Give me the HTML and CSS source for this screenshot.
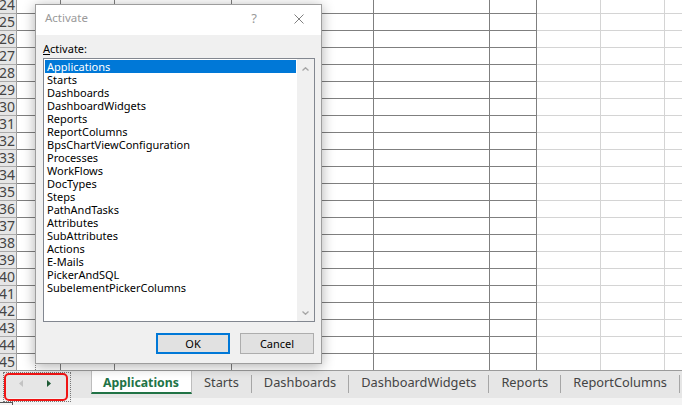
FILE: index.html
```html
<!DOCTYPE html>
<html lang="en">
<head>
<meta charset="utf-8">
<title>Activate</title>
<link rel="stylesheet" href="styles.css">
</head>
<body>
<div class="app">
  <div class="sheet">
    <div class="row"><span class="rh">24</span><span class="c"></span><span class="c"></span><span class="c"></span><span class="c"></span><span class="c"></span><span class="c"></span><span class="c lt"></span><span class="c lt"></span><span class="c lt end"></span></div>
    <div class="row"><span class="rh">25</span><span class="c"></span><span class="c"></span><span class="c"></span><span class="c"></span><span class="c"></span><span class="c"></span><span class="c lt"></span><span class="c lt"></span><span class="c lt end"></span></div>
    <div class="row"><span class="rh">26</span><span class="c"></span><span class="c"></span><span class="c"></span><span class="c"></span><span class="c"></span><span class="c"></span><span class="c lt"></span><span class="c lt"></span><span class="c lt end"></span></div>
    <div class="row"><span class="rh">27</span><span class="c"></span><span class="c"></span><span class="c"></span><span class="c"></span><span class="c"></span><span class="c"></span><span class="c lt"></span><span class="c lt"></span><span class="c lt end"></span></div>
    <div class="row"><span class="rh">28</span><span class="c"></span><span class="c"></span><span class="c"></span><span class="c"></span><span class="c"></span><span class="c"></span><span class="c lt"></span><span class="c lt"></span><span class="c lt end"></span></div>
    <div class="row"><span class="rh">29</span><span class="c"></span><span class="c"></span><span class="c"></span><span class="c"></span><span class="c"></span><span class="c"></span><span class="c lt"></span><span class="c lt"></span><span class="c lt end"></span></div>
    <div class="row"><span class="rh">30</span><span class="c"></span><span class="c"></span><span class="c"></span><span class="c"></span><span class="c"></span><span class="c"></span><span class="c lt"></span><span class="c lt"></span><span class="c lt end"></span></div>
    <div class="row"><span class="rh">31</span><span class="c"></span><span class="c"></span><span class="c"></span><span class="c"></span><span class="c"></span><span class="c"></span><span class="c lt"></span><span class="c lt"></span><span class="c lt end"></span></div>
    <div class="row"><span class="rh">32</span><span class="c"></span><span class="c"></span><span class="c"></span><span class="c"></span><span class="c"></span><span class="c"></span><span class="c lt"></span><span class="c lt"></span><span class="c lt end"></span></div>
    <div class="row"><span class="rh">33</span><span class="c"></span><span class="c"></span><span class="c"></span><span class="c"></span><span class="c"></span><span class="c"></span><span class="c lt"></span><span class="c lt"></span><span class="c lt end"></span></div>
    <div class="row"><span class="rh">34</span><span class="c"></span><span class="c"></span><span class="c"></span><span class="c"></span><span class="c"></span><span class="c"></span><span class="c lt"></span><span class="c lt"></span><span class="c lt end"></span></div>
    <div class="row"><span class="rh">35</span><span class="c"></span><span class="c"></span><span class="c"></span><span class="c"></span><span class="c"></span><span class="c"></span><span class="c lt"></span><span class="c lt"></span><span class="c lt end"></span></div>
    <div class="row"><span class="rh">36</span><span class="c"></span><span class="c"></span><span class="c"></span><span class="c"></span><span class="c"></span><span class="c"></span><span class="c lt"></span><span class="c lt"></span><span class="c lt end"></span></div>
    <div class="row"><span class="rh">37</span><span class="c"></span><span class="c"></span><span class="c"></span><span class="c"></span><span class="c"></span><span class="c"></span><span class="c lt"></span><span class="c lt"></span><span class="c lt end"></span></div>
    <div class="row"><span class="rh">38</span><span class="c"></span><span class="c"></span><span class="c"></span><span class="c"></span><span class="c"></span><span class="c"></span><span class="c lt"></span><span class="c lt"></span><span class="c lt end"></span></div>
    <div class="row"><span class="rh">39</span><span class="c"></span><span class="c"></span><span class="c"></span><span class="c"></span><span class="c"></span><span class="c"></span><span class="c lt"></span><span class="c lt"></span><span class="c lt end"></span></div>
    <div class="row"><span class="rh">40</span><span class="c"></span><span class="c"></span><span class="c"></span><span class="c"></span><span class="c"></span><span class="c"></span><span class="c lt"></span><span class="c lt"></span><span class="c lt end"></span></div>
    <div class="row"><span class="rh">41</span><span class="c"></span><span class="c"></span><span class="c"></span><span class="c"></span><span class="c"></span><span class="c"></span><span class="c lt"></span><span class="c lt"></span><span class="c lt end"></span></div>
    <div class="row"><span class="rh">42</span><span class="c"></span><span class="c"></span><span class="c"></span><span class="c"></span><span class="c"></span><span class="c"></span><span class="c lt"></span><span class="c lt"></span><span class="c lt end"></span></div>
    <div class="row"><span class="rh">43</span><span class="c"></span><span class="c"></span><span class="c"></span><span class="c"></span><span class="c"></span><span class="c"></span><span class="c lt"></span><span class="c lt"></span><span class="c lt end"></span></div>
    <div class="row"><span class="rh">44</span><span class="c"></span><span class="c"></span><span class="c"></span><span class="c"></span><span class="c"></span><span class="c"></span><span class="c lt"></span><span class="c lt"></span><span class="c lt end"></span></div>
    <div class="row last"><span class="rh">45</span><span class="c"></span><span class="c"></span><span class="c"></span><span class="c"></span><span class="c"></span><span class="c"></span><span class="c lt"></span><span class="c lt"></span><span class="c lt end"></span></div>
  </div>

  <div class="tabbar">
    <div class="nav">
      <svg class="arrow disabled" width="4" height="7" viewBox="0 0 4 7"><path d="M4 0V7L0 3.5Z"/></svg>
      <svg class="arrow next" width="4" height="7" viewBox="0 0 4 7"><path d="M0 0V7L4 3.5Z"/></svg>
    </div>
    <div class="tabs">
      <div class="tab active">Applications</div>
      <div class="tab">Starts</div>
      <span class="sep"></span>
      <div class="tab">Dashboards</div>
      <span class="sep"></span>
      <div class="tab">DashboardWidgets</div>
      <span class="sep"></span>
      <div class="tab">Reports</div>
      <span class="sep"></span>
      <div class="tab">ReportColumns</div>
      <span class="sep"></span>
    </div>
  </div>
  <div class="statusbar"><span class="corner"></span></div>
</div>

<div class="pagebreak"></div>
<div class="focusrect"></div>
<div class="redmark"></div>

<div class="dialog">
  <div class="titlebar">
    <span class="title">Activate</span>
    <span class="help">?</span>
    <svg class="close" width="10" height="10" viewBox="0 0 10 10"><path d="M0.5 0.5L9.5 9.5M9.5 0.5L0.5 9.5"/></svg>
  </div>
  <div class="dbody">
    <div class="label"><u>A</u>ctivate:</div>
    <div class="listbox">
      <ul class="items">
        <li class="sel">Applications</li>
        <li>Starts</li>
        <li>Dashboards</li>
        <li>DashboardWidgets</li>
        <li>Reports</li>
        <li>ReportColumns</li>
        <li>BpsChartViewConfiguration</li>
        <li>Processes</li>
        <li>WorkFlows</li>
        <li>DocTypes</li>
        <li>Steps</li>
        <li>PathAndTasks</li>
        <li>Attributes</li>
        <li>SubAttributes</li>
        <li>Actions</li>
        <li>E-Mails</li>
        <li>PickerAndSQL</li>
        <li>SubelementPickerColumns</li>
      </ul>
      <div class="vscroll">
        <svg width="7" height="4" viewBox="0 0 7 4"><path d="M0.5 3.5L3.5 0.7L6.5 3.5"/></svg>
        <svg width="7" height="4" viewBox="0 0 7 4"><path d="M0.5 0.5L3.5 3.3L6.5 0.5"/></svg>
      </div>
    </div>
    <div class="buttons">
      <button class="btn default">OK</button>
      <button class="btn">Cancel</button>
    </div>
  </div>
</div>
</body>
</html>
```

FILE: styles.css
```css
* { box-sizing: border-box; }

html, body {
  margin: 0;
  padding: 0;
  width: 682px;
  height: 405px;
  overflow: hidden;
  background: #ffffff;
  font-family: "Noto Sans", "Open Sans", sans-serif;
}

.app {
  display: flex;
  flex-direction: column;
  height: 405px;
}

/* ---------- sheet grid ---------- */
.sheet {
  margin-top: -3px;
  display: flex;
  flex-direction: column;
}

.row {
  display: grid;
  grid-template-columns: 17px 44px 54px 117px 142px 116px 47px 64px 64px 1fr;
  height: 17px;
}

.row.last { height: 16px; }

.rh {
  display: flex;
  justify-content: flex-end;
  overflow: hidden;
  background: #e6e6e6;
  border-right: 1px solid #9e9e9e;
  border-bottom: 1px solid #ababab;
  color: #444444;
  font-size: 14px;
  line-height: 16px;
  padding-right: 1px;
  white-space: nowrap;
}

.c {
  border-right: 1px solid #7f7f7f;
  border-bottom: 1px solid #7f7f7f;
}

.c.lt {
  border-right-color: #d4d4d4;
  border-bottom-color: #d4d4d4;
}

.c.end { border-right: 0; }

.row.last .c,
.row.last .rh { border-bottom: 0; }

/* ---------- sheet tabs ---------- */
.tabbar {
  display: flex;
  height: 29px;
  background: #e6e6e6;
  border-top: 1px solid #9b9b9b;
}

.nav {
  width: 91px;
  display: flex;
  align-items: flex-start;
  padding-left: 19px;
  padding-top: 9px;
}

.arrow.disabled { fill: #c3c3c3; }
.arrow.next { fill: #1e5a35; margin-left: 24px; }

.tabs {
  display: flex;
  align-items: flex-start;
}

.tab {
  height: 23px;
  padding: 2px 12px 0;
  font-size: 12.8px;
  line-height: 19px;
  color: #444444;
  white-space: nowrap;
  border-bottom: 2px solid transparent;
}

.tab.active {
  background: #ffffff;
  border-left: 1px solid #bdbdbd;
  border-right: 1px solid #bdbdbd;
  border-bottom: 2px solid #217346;
  padding: 2px 12px 0 11px;
  font-weight: 700;
  font-size: 12.3px;
  color: #217346;
}

.sep {
  width: 1px;
  height: 18px;
  margin-top: 4px;
  background: #a6a6a6;
}

.statusbar {
  flex: 1;
  background: #f3f3f3;
}

.corner {
  display: block;
  width: 13px;
  height: 3px;
  margin-top: 4px;
  border-top: 1px solid #555555;
  border-right: 1px solid #555555;
}

/* ---------- overlays ---------- */
.pagebreak {
  position: absolute;
  left: 35px;
  top: 355px;
  width: 1px;
  height: 15px;
  border-left: 1px dotted #8a8a8a;
}

.focusrect {
  position: absolute;
  left: 3px;
  top: 372px;
  width: 68px;
  height: 30px;
  border: 1px dotted #777777;
}

.redmark {
  position: absolute;
  left: 4px;
  top: 373px;
  width: 64px;
  height: 28px;
  border: 2px solid #f01414;
  border-radius: 5px;
}

/* ---------- dialog ---------- */
.dialog {
  position: absolute;
  left: 35px;
  top: 4px;
  width: 287px;
  height: 360px;
  background: #f0f0f0;
  border: 1px solid #9d9d9d;
  box-shadow: 0 2px 12px rgba(0, 0, 0, 0.32);
  display: flex;
  flex-direction: column;
}

.titlebar {
  height: 30px;
  background: #ffffff;
  display: flex;
  align-items: flex-start;
  padding-left: 9px;
}

.title {
  flex: 1;
  font-size: 11.5px;
  line-height: 26px;
  color: #9a9a9a;
}

.help {
  width: 10px;
  text-align: center;
  font-size: 13px;
  line-height: 26px;
  color: #9a9a9a;
  margin-right: 35px;
}

.close {
  margin-top: 9px;
  margin-right: 17px;
  stroke: #808080;
  stroke-width: 1;
  fill: none;
}

.dbody {
  flex: 1;
  display: flex;
  flex-direction: column;
  padding: 7px 6px 9px 7px;
}

.label {
  font-size: 11px;
  line-height: 13px;
  color: #000000;
  margin-bottom: 3px;
}

.label u { text-underline-offset: 1px; }

.listbox {
  height: 264px;
  background: #ffffff;
  border: 1px solid #828790;
  display: flex;
  margin-bottom: 11px;
}

.items {
  flex: 1;
  list-style: none;
  margin: 0;
  padding: 1px;
}

.items li {
  height: 13px;
  padding-left: 2px;
  font-size: 11px;
  line-height: 13px;
  color: #000000;
  white-space: nowrap;
}

.items li.sel {
  background: #0078d7;
  color: #ffffff;
}

.vscroll {
  width: 17px;
  background: #f0f0f0;
  display: flex;
  flex-direction: column;
  justify-content: space-between;
  align-items: center;
  padding: 8px 0 6px;
}

.vscroll svg {
  stroke: #a6a6a6;
  stroke-width: 1.3;
  fill: none;
}

.buttons {
  display: flex;
  justify-content: flex-end;
  gap: 10px;
  padding-right: 1px;
}

.btn {
  width: 74px;
  height: 21px;
  margin: 0;
  padding: 0;
  background: #e1e1e1;
  border: 1px solid #adadad;
  font-family: "Noto Sans", "Open Sans", sans-serif;
  font-size: 11px;
  line-height: 17px;
  color: #000000;
}

.btn.default {
  border: 2px solid #0078d7;
}
```
